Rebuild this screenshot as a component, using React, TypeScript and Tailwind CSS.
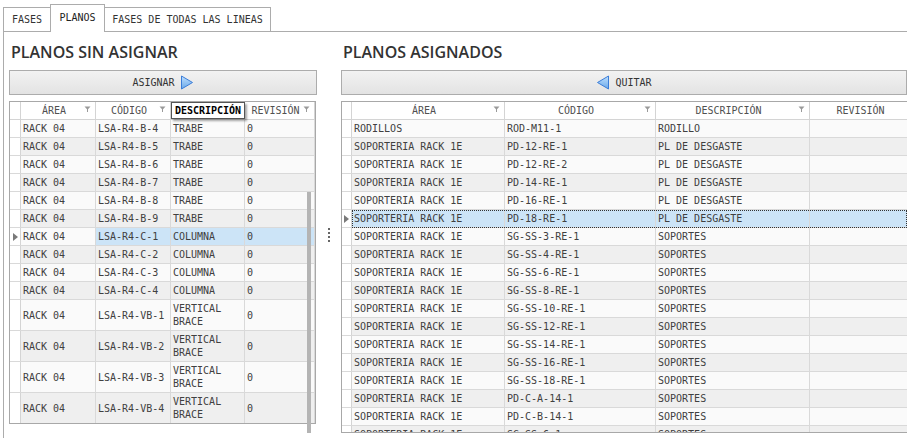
import React from "react";

const mono = { fontFamily: '"DejaVu Sans Mono", "Liberation Mono", monospace' };

const Funnel = () => (
  <svg width="7" height="7" viewBox="0 0 7 7" className="absolute right-[4px] top-[4px]">
    <path d="M0.5 0.5 H6.5 L4 3.2 V6 H3 V3.2 Z" fill="#9a9a9a" />
  </svg>
);

const Arrow = ({ dir }: { dir: "left" | "right" }) => (
  <svg width="14" height="15" viewBox="0 0 14 15">
    <defs>
      <linearGradient id={`g-${dir}`} x1="0" y1="0" x2="0" y2="1">
        <stop offset="0" stopColor="#bfe0ff" />
        <stop offset="1" stopColor="#6aa8e8" />
      </linearGradient>
    </defs>
    {dir === "right" ? (
      <path d="M1.5 1 L12.5 7.5 L1.5 14 Z" fill={`url(#g-${dir})`} stroke="#3b7dd8" strokeWidth="1" />
    ) : (
      <path d="M12.5 1 L1.5 7.5 L12.5 14 Z" fill={`url(#g-${dir})`} stroke="#3b7dd8" strokeWidth="1" />
    )}
  </svg>
);

const RowMark = () => (
  <svg width="5" height="8" viewBox="0 0 5 8">
    <path d="M0 0 L5 4 L0 8 Z" fill="#7a7a7a" />
  </svg>
);

type Col = { title: string; w: string; drag?: boolean };

const leftCols: Col[] = [
  { title: "ÁREA", w: "w-[75px]" },
  { title: "CÓDIGO", w: "w-[75px]" },
  { title: "DESCRIPCIÓN", w: "w-[74px]", drag: true },
  { title: "REVISIÓN", w: "w-[70px]" },
];

const rightCols: Col[] = [
  { title: "ÁREA", w: "w-[153px]" },
  { title: "CÓDIGO", w: "w-[151px]" },
  { title: "DESCRIPCIÓN", w: "w-[154px]" },
  { title: "REVISIÓN", w: "w-[110px]" },
];

const leftRows: [string, string, string, string][] = [
  ["RACK 04", "LSA-R4-B-4", "TRABE", "0"],
  ["RACK 04", "LSA-R4-B-5", "TRABE", "0"],
  ["RACK 04", "LSA-R4-B-6", "TRABE", "0"],
  ["RACK 04", "LSA-R4-B-7", "TRABE", "0"],
  ["RACK 04", "LSA-R4-B-8", "TRABE", "0"],
  ["RACK 04", "LSA-R4-B-9", "TRABE", "0"],
  ["RACK 04", "LSA-R4-C-1", "COLUMNA", "0"],
  ["RACK 04", "LSA-R4-C-2", "COLUMNA", "0"],
  ["RACK 04", "LSA-R4-C-3", "COLUMNA", "0"],
  ["RACK 04", "LSA-R4-C-4", "COLUMNA", "0"],
  ["RACK 04", "LSA-R4-VB-1", "VERTICAL BRACE", "0"],
  ["RACK 04", "LSA-R4-VB-2", "VERTICAL BRACE", "0"],
  ["RACK 04", "LSA-R4-VB-3", "VERTICAL BRACE", "0"],
  ["RACK 04", "LSA-R4-VB-4", "VERTICAL BRACE", "0"],
];

const S = "SOPORTERIA RACK 1E";
const rightRows: [string, string, string, string][] = [
  ["RODILLOS", "ROD-M11-1", "RODILLO", ""],
  [S, "PD-12-RE-1", "PL DE DESGASTE", ""],
  [S, "PD-12-RE-2", "PL DE DESGASTE", ""],
  [S, "PD-14-RE-1", "PL DE DESGASTE", ""],
  [S, "PD-16-RE-1", "PL DE DESGASTE", ""],
  [S, "PD-18-RE-1", "PL DE DESGASTE", ""],
  [S, "SG-SS-3-RE-1", "SOPORTES", ""],
  [S, "SG-SS-4-RE-1", "SOPORTES", ""],
  [S, "SG-SS-6-RE-1", "SOPORTES", ""],
  [S, "SG-SS-8-RE-1", "SOPORTES", ""],
  [S, "SG-SS-10-RE-1", "SOPORTES", ""],
  [S, "SG-SS-12-RE-1", "SOPORTES", ""],
  [S, "SG-SS-14-RE-1", "SOPORTES", ""],
  [S, "SG-SS-16-RE-1", "SOPORTES", ""],
  [S, "SG-SS-18-RE-1", "SOPORTES", ""],
  [S, "PD-C-A-14-1", "SOPORTES", ""],
  [S, "PD-C-B-14-1", "SOPORTES", ""],
  [S, "SG-SS-6-1", "SOPORTES", ""],
];

const Header = ({ cols, ind }: { cols: Col[]; ind: string }) => (
  <div className="flex h-[18px] shrink-0 border-b border-[#d4d4d4] bg-white text-[#505050]">
    <div className={`${ind} shrink-0 border-r border-[#d4d4d4]`} />
    {cols.map((c) =>
      c.drag ? (
        <div
          key={c.title}
          className={`${c.w} relative z-10 flex shrink-0 items-center justify-center border border-[#555] bg-white font-bold text-black shadow-[2px_2px_2px_rgba(0,0,0,0.35)]`}
        >
          {c.title}
        </div>
      ) : (
        <div
          key={c.title}
          className={`${c.w} relative flex shrink-0 items-center justify-center border-r border-[#d4d4d4] pr-[8px]`}
        >
          {c.title}
          <Funnel />
        </div>
      )
    )}
  </div>
);

const LeftGrid = () => (
  <div className="relative ml-[5px] w-[307px]">
    <div className="flex h-[323px] flex-col overflow-hidden border border-[#a8a8a8] bg-white">
      <Header cols={leftCols} ind="w-[11px]" />
      {leftRows.map((r, i) => {
        const sel = i === 6;
        const tall = r[2].includes(" ");
        const bg = i % 2 === 0 ? "bg-[#fafafa]" : "bg-[#efefef]";
        return (
          <div key={r[1]} className={`flex shrink-0 border-b border-[#d9d9d9] ${tall ? "h-[31px]" : "h-[18px]"}`}>
            <div className="flex w-[11px] shrink-0 items-center justify-center border-r border-[#d4d4d4] bg-white">
              {sel && <RowMark />}
            </div>
            {r.map((v, j) => (
              <div
                key={j}
                className={`${leftCols[j].w} flex shrink-0 items-center border-r border-[#d9d9d9] pl-[2px] leading-[13px] ${
                  sel && j > 0 ? "bg-[#cce4f7]" : bg
                }`}
              >
                {tall && j === 2 ? (
                  <span>
                    VERTICAL
                    <br />
                    BRACE
                  </span>
                ) : (
                  v
                )}
              </div>
            ))}
          </div>
        );
      })}
    </div>
    <div className="absolute right-[5px] top-[91px] h-[241px] w-[4px] bg-[#b4b4b4]" />
  </div>
);

const RightGrid = () => (
  <div className="flex h-[332px] flex-col overflow-hidden border-y border-l border-[#a8a8a8] bg-white">
    <Header cols={rightCols} ind="w-[10px]" />
    {rightRows.map((r, i) => {
      const sel = i === 5;
      const bg = sel ? "bg-[#cce4f7]" : i % 2 === 0 ? "bg-[#fafafa]" : "bg-[#efefef]";
      return (
        <div key={r[1]} className="relative flex h-[18px] shrink-0 border-b border-[#d9d9d9]">
          <div className="flex w-[10px] shrink-0 items-center justify-center border-r border-[#d4d4d4] bg-white">
            {sel && <RowMark />}
          </div>
          {r.map((v, j) => (
            <div
              key={j}
              className={`${rightCols[j].w} flex shrink-0 items-center border-r border-[#d9d9d9] pl-[2px] ${bg}`}
            >
              {v}
            </div>
          ))}
          {sel && (
            <div className="pointer-events-none absolute bottom-[-1px] left-[10px] right-0 top-0 border border-dotted border-[#333]" />
          )}
        </div>
      );
    })}
  </div>
);

const Button = ({ children }: { children: React.ReactNode }) => (
  <div className="flex h-[25px] items-center justify-center gap-[5px] border border-[#acacac] bg-gradient-to-b from-[#f2f2f2] to-[#e3e3e3] text-[#333]">
    {children}
  </div>
);

export default function App() {
  const title = "text-[16px] font-semibold text-[#333] leading-none";
  const sans = { fontFamily: '"Open Sans", "Noto Sans", sans-serif' };
  return (
    <div className="h-[438px] w-[907px] overflow-hidden bg-white text-[10px] text-[#404040]" style={mono}>
      {/* tabs */}
      <div className="flex h-[31px] items-end pl-[3px]">
        <div className="flex h-[24px] w-[47px] items-center justify-center border-l border-t border-[#acacac] bg-white text-[#333]">
          FASES
        </div>
        <div className="relative z-10 -mb-px flex h-[28px] w-[55px] items-center justify-center border-x border-t border-[#acacac] bg-white pb-[3px] text-[#222]">
          PLANOS
        </div>
        <div className="flex h-[24px] w-[166px] items-center justify-center border-r border-t border-[#acacac] bg-white text-[#333]">
          FASES DE TODAS LAS LINEAS
        </div>
      </div>
      {/* content */}
      <div className="ml-[3px] flex h-[407px] border-l border-t border-[#acacac]">
        <div className="w-[314px] shrink-0">
          <div className={`${title} pl-[7px] pt-[12px]`} style={sans}>
            PLANOS SIN ASIGNAR
          </div>
          <div className="ml-[5px] mt-[10px] w-[308px]">
            <Button>
              ASIGNAR <Arrow dir="right" />
            </Button>
          </div>
          <div className="mt-[6px]">
            <LeftGrid />
          </div>
        </div>
        {/* splitter */}
        <div className="w-[23px] shrink-0 pl-[10px] pt-[196px]">
          <div className="flex flex-col gap-[2px]">
            <div className="h-[2px] w-[2px] bg-[#666]" />
            <div className="h-[2px] w-[2px] bg-[#666]" />
            <div className="h-[2px] w-[2px] bg-[#666]" />
            <div className="h-[2px] w-[2px] bg-[#666]" />
          </div>
        </div>
        <div className="min-w-0 flex-1">
          <div className={`${title} pl-[2px] pt-[12px]`} style={sans}>
            PLANOS ASIGNADOS
          </div>
          <div className="mt-[10px]">
            <Button>
              <Arrow dir="left" /> QUITAR
            </Button>
          </div>
          <div className="mt-[6px]">
            <RightGrid />
          </div>
        </div>
      </div>
    </div>
  );
}
